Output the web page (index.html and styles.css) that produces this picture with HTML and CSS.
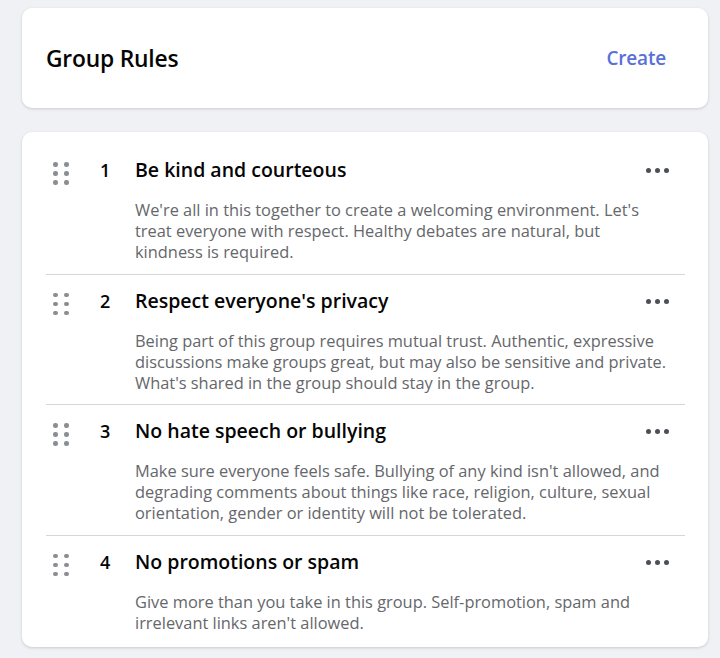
FILE: index.html
```html
<!DOCTYPE html>
<html>
<head>
<meta charset="utf-8">
<link rel="stylesheet" href="styles.css">
</head>
<body>
<div class="page">
  <div class="card header">
    <h1 class="title">Group Rules</h1>
    <a class="create">Create</a>
  </div>
  <div class="card rules">
    <div class="rule">
      <div class="handle"><span></span><span></span><span></span><span></span><span></span><span></span></div>
      <div class="num">1</div>
      <div class="body">
        <div class="head">
          <div class="rule-title">Be kind and courteous</div>
          <div class="more"><span></span><span></span><span></span></div>
        </div>
        <p class="desc">We're all in this together to create a welcoming environment. Let's treat everyone with respect. Healthy debates are natural, but kindness is required.</p>
      </div>
    </div>
    <div class="rule">
      <div class="handle"><span></span><span></span><span></span><span></span><span></span><span></span></div>
      <div class="num">2</div>
      <div class="body">
        <div class="head">
          <div class="rule-title">Respect everyone's privacy</div>
          <div class="more"><span></span><span></span><span></span></div>
        </div>
        <p class="desc">Being part of this group requires mutual trust. Authentic, expressive discussions make groups great, but may also be sensitive and private. What's shared in the group should stay in the group.</p>
      </div>
    </div>
    <div class="rule">
      <div class="handle"><span></span><span></span><span></span><span></span><span></span><span></span></div>
      <div class="num">3</div>
      <div class="body">
        <div class="head">
          <div class="rule-title">No hate speech or bullying</div>
          <div class="more"><span></span><span></span><span></span></div>
        </div>
        <p class="desc">Make sure everyone feels safe. Bullying of any kind isn't allowed, and degrading comments about things like race, religion, culture, sexual orientation, gender or identity will not be tolerated.</p>
      </div>
    </div>
    <div class="rule">
      <div class="handle"><span></span><span></span><span></span><span></span><span></span><span></span></div>
      <div class="num">4</div>
      <div class="body">
        <div class="head">
          <div class="rule-title">No promotions or spam</div>
          <div class="more"><span></span><span></span><span></span></div>
        </div>
        <p class="desc">Give more than you take in this group. Self-promotion, spam and irrelevant links aren't allowed.</p>
      </div>
    </div>
  </div>
</div>
</body>
</html>
```
FILE: styles.css
```css
* { box-sizing: border-box; }
html, body { margin: 0; padding: 0; }
body {
  background: #f0f1f4;
  font-family: "Open Sans", "Noto Sans", sans-serif;
  color: #050505;
  width: 720px;
  height: 658px;
  overflow: hidden;
}
.page {
  padding: 8px 12px 0 22px;
  display: flex;
  flex-direction: column;
  gap: 24px;
}
.card {
  background: #fff;
  border-radius: 10px;
  box-shadow: 0 1px 3px rgba(0,0,0,0.16);
}
.header {
  height: 100px;
  display: flex;
  align-items: center;
  justify-content: space-between;
  padding: 0 42px 0 24px;
}
.title {
  margin: 0;
  font-size: 22.8px;
  font-weight: 600;
  letter-spacing: -0.2px;
}
.create {
  color: #5a6fd8;
  font-size: 19px;
  font-weight: 600;
  letter-spacing: -0.2px;
}
.rules {
  padding: 0 23px 0 24px;
}
.rule {
  display: grid;
  grid-template-columns: 54px 35px 1fr;
  align-items: start;
  border-bottom: 1px solid #d4d6da;
  padding: 13px 0 11.5px;
}
.rule:last-child { border-bottom: none; padding-bottom: 14px; }
.rule:first-child { padding-top: 25px; }
.handle {
  display: grid;
  grid-template-columns: repeat(2, 4.5px);
  column-gap: 6.5px;
  row-gap: 4.5px;
  margin: 5px 0 0 7px;
}
.handle span {
  width: 4.5px;
  height: 4.5px;
  border-radius: 50%;
  background: #8a8d91;
}
.num {
  font-size: 18px;
  font-weight: 600;
  line-height: 26px;
}
.head {
  display: flex;
  justify-content: space-between;
  align-items: flex-start;
}
.rule-title {
  font-size: 19.5px;
  font-weight: 600;
  line-height: 26px;
}
.desc {
  margin: 16px 0 0;
  padding-right: 17px;
  font-size: 16.4px;
  line-height: 21px;
  color: #65676b;
}
.more {
  display: flex;
  gap: 4px;
  padding-top: 11px;
  margin-right: 16px;
}
.more span {
  width: 5px;
  height: 5px;
  border-radius: 50%;
  background: #4b4f56;
}
```
